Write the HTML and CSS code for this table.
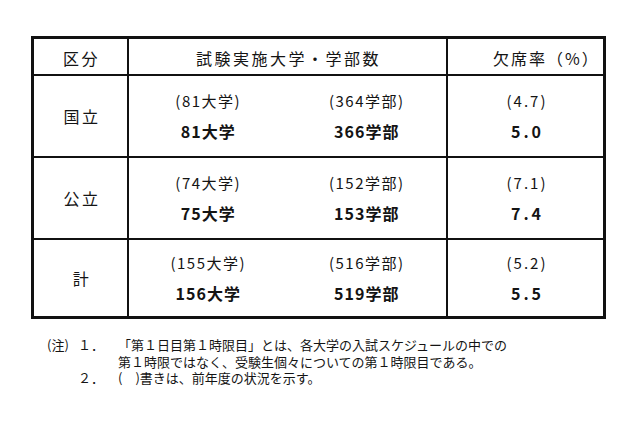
FILE: index.html
```html
<!DOCTYPE html>
<html lang="ja">
<head>
<meta charset="utf-8">
<link rel="stylesheet" href="styles.css">
</head>
<body>
<div class="page">
  <div class="grid">
    <div class="cell head">区分</div>
    <div class="cell head">試験実施大学・学部数</div>
    <div class="cell head rate-head last">欠席率（%）</div>

    <div class="cell label">国立</div>
    <div class="cell pair">
      <div class="sub"><div class="prev">(81大学)</div><div class="cur">81大学</div></div>
      <div class="sub"><div class="prev">(364学部)</div><div class="cur">366学部</div></div>
    </div>
    <div class="cell rate last"><div class="prev">(4.7)</div><div class="cur">5.0</div></div>

    <div class="cell label">公立</div>
    <div class="cell pair">
      <div class="sub"><div class="prev">(74大学)</div><div class="cur">75大学</div></div>
      <div class="sub"><div class="prev">(152学部)</div><div class="cur">153学部</div></div>
    </div>
    <div class="cell rate last"><div class="prev">(7.1)</div><div class="cur">7.4</div></div>

    <div class="cell label bottom">計</div>
    <div class="cell pair bottom">
      <div class="sub"><div class="prev">(155大学)</div><div class="cur">156大学</div></div>
      <div class="sub"><div class="prev">(516学部)</div><div class="cur">519学部</div></div>
    </div>
    <div class="cell rate last bottom"><div class="prev">(5.2)</div><div class="cur">5.5</div></div>
  </div>

  <div class="notes">
    <div class="n-tag">(注)</div>
    <div class="n-num">１．</div>
    <div class="n-text">「第１日目第１時限目」とは、各大学の入試スケジュールの中での</div>
    <div class="n-tag"></div>
    <div class="n-num"></div>
    <div class="n-text">第１時限ではなく、受験生個々についての第１時限目である。</div>
    <div class="n-tag"></div>
    <div class="n-num">２．</div>
    <div class="n-text">(　)書きは、前年度の状況を示す。</div>
  </div>
</div>
</body>
</html>
```

FILE: styles.css
```css
html, body {
  margin: 0;
  padding: 0;
  background: #ffffff;
}
body {
  width: 640px;
  height: 426px;
  overflow: hidden;
  font-family: "Noto Sans CJK JP", "Noto Sans", sans-serif;
  color: #141414;
}
.page {
  padding: 36px 0 0 31px;
}
.grid {
  display: grid;
  grid-template-columns: 95px 319px 155px;
  grid-template-rows: 37px 82px 82px 76px;
  border: 3px solid #111;
  width: 569px;
}
.cell {
  box-sizing: border-box;
  border-right: 2px solid #111;
  border-bottom: 2px solid #111;
  display: flex;
  align-items: center;
  justify-content: center;
}
.cell.last { border-right: none; }
.cell.bottom { border-bottom: none; }

.head {
  font-size: 16px;
  letter-spacing: 2.5px;
  padding-top: 3px;
  padding-left: 2px;
}
.rate-head {
  justify-content: flex-start;
  padding-left: 45px;
  letter-spacing: 2px;
}
.label {
  font-size: 16px;
  letter-spacing: 2.5px;
  padding-left: 3px;
}
.pair {
  display: grid;
  grid-template-columns: 1fr 1fr;
  align-items: center;
}
.sub, .rate {
  display: flex;
  flex-direction: column;
  align-items: center;
  justify-content: center;
}
.prev {
  font-size: 15px;
  line-height: 31px;
  letter-spacing: 1.5px;
}
.cur {
  font-size: 16px;
  line-height: 31px;
  font-weight: 700;
  letter-spacing: 1px;
}
.rate .prev { letter-spacing: 2px; padding-left: 3px; }
.rate .cur { letter-spacing: 3px; padding-left: 4px; }

.notes {
  display: grid;
  grid-template-columns: 31px 40px auto;
  margin: 18px 0 0 16px;
  font-size: 13px;
  line-height: 16.5px;
}
.n-text { white-space: nowrap; }
```
